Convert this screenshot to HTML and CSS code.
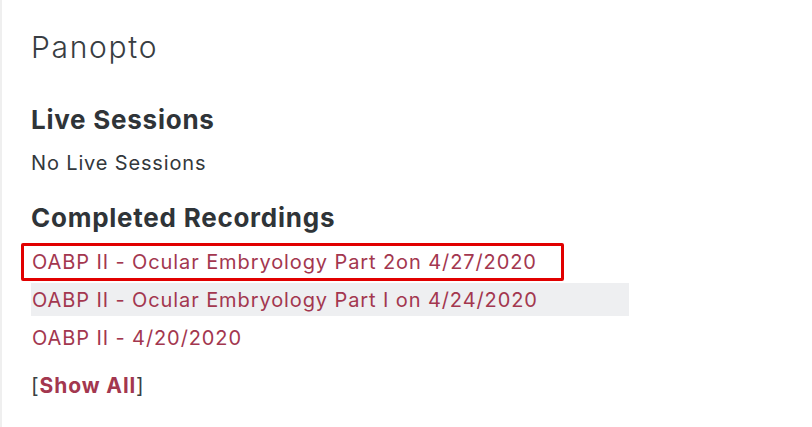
FILE: index.html
```html
<!DOCTYPE html>
<html lang="en">
<head>
<meta charset="utf-8">
<title>Panopto</title>
<link rel="stylesheet" href="styles.css">
</head>
<body>
<div class="panel">
  <h2 class="title">Panopto</h2>
  <h3 class="section-title live">Live Sessions</h3>
  <p class="empty">No Live Sessions</p>
  <h3 class="section-title completed">Completed Recordings</h3>
  <ul class="recordings">
    <li class="row highlighted"><a href="#">OABP II - Ocular Embryology Part 2on 4/27/2020</a><span class="callout"></span></li>
    <li class="row hovered"><a href="#">OABP II - Ocular Embryology Part I on 4/24/2020</a></li>
    <li class="row"><a href="#">OABP II - 4/20/2020</a></li>
  </ul>
  <p class="show-all">[<a href="#">Show All</a>]</p>
</div>
</body>
</html>
```
FILE: styles.css
```css
html, body {
  margin: 0;
  padding: 0;
  background: #ffffff;
}
body {
  font-family: Inter, "Noto Sans", "Liberation Sans", sans-serif;
  color: #2f3438;
}
.panel {
  border-left: 2px solid #efefef;
  min-height: 427px;
  box-sizing: border-box;
  padding: 32px 0 0 29px;
}
.title {
  margin: 0;
  font-size: 30px;
  line-height: 30px;
  font-weight: 300;
  letter-spacing: 1.7px;
  color: #383d42;
}
.section-title {
  margin: 0;
  font-size: 26px;
  line-height: 30px;
  font-weight: 700;
  letter-spacing: 0.75px;
  color: #2f3438;
}
.live {
  margin-top: 43px;
}
.empty {
  margin: 16px 0 0;
  font-size: 20px;
  line-height: 24px;
  letter-spacing: 0.85px;
  color: #33383c;
}
.completed {
  margin-top: 28px;
}
.recordings {
  list-style: none;
  margin: 12px 0 0;
  padding: 0;
  display: flex;
  flex-direction: column;
  gap: 5px;
}
.row {
  position: relative;
  width: 598px;
  height: 33px;
  display: flex;
  align-items: center;
  padding-left: 1px;
  box-sizing: border-box;
  font-size: 20px;
  letter-spacing: 0.9px;
}
.row a {
  color: #a3374f;
  text-decoration: none;
}
.hovered {
  background: #eeeff1;
}
.callout {
  position: absolute;
  left: -10px;
  top: -2px;
  width: 543px;
  height: 38px;
  box-sizing: border-box;
  border: 3px solid #e10000;
  border-radius: 2px;
}
.show-all {
  margin: 20px 0 0;
  font-size: 21px;
  line-height: 24px;
  letter-spacing: 0.9px;
  color: #3a3f44;
}
.show-all a {
  color: #a3374f;
  font-weight: 700;
  text-decoration: none;
}
```
